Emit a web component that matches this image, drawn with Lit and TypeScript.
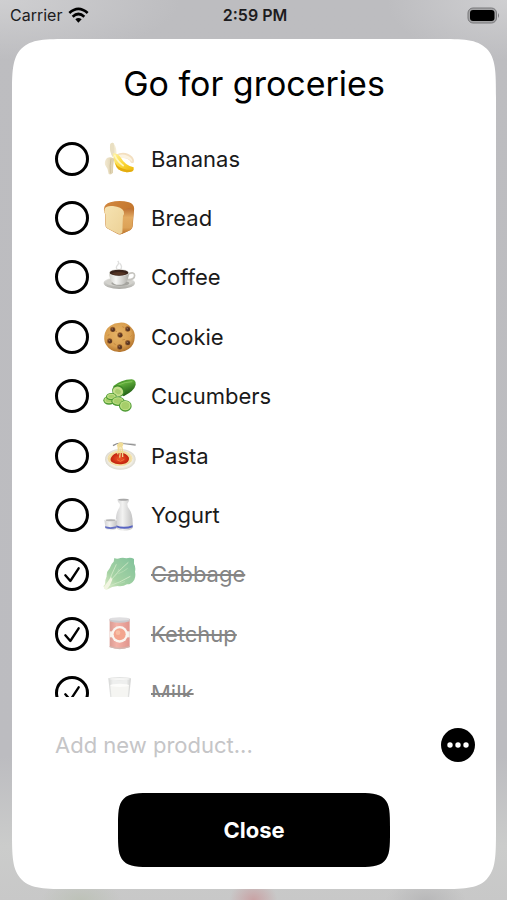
import { LitElement, html, css, svg, nothing } from "lit";
import type { TemplateResult } from "lit";
import { customElement, property, state } from "lit/decorators.js";
import { classMap } from "lit/directives/class-map.js";

interface Product {
  name: string;
  done: boolean;
}

/* Product pictures, drawn on a 102 x 102 canvas. */
const pictures: Record<string, TemplateResult> = {
  Bananas: svg`
    <defs>
      <linearGradient id="ba" x1="0" y1="0" x2="1" y2="1">
        <stop offset="0" stop-color="#fff3a0" /><stop offset=".5" stop-color="#fbd83a" /><stop offset="1" stop-color="#eab305" />
      </linearGradient>
      <linearGradient id="bp" x1="0" y1="0" x2="1" y2="0">
        <stop offset="0" stop-color="#f3ead3" /><stop offset="1" stop-color="#d9cba6" />
      </linearGradient>
    </defs>
    <path d="M22 6Q28 0 32 4Q42 18 40 40L28 44Q18 24 22 6Z" fill="#f4ecd4" />
    <path d="M22 6Q28 0 32 4Q36 20 34 40L28 44Q18 24 22 6Z" fill="#e9dfc2" />
    <path d="M38 38Q66 24 88 44Q96 54 91 63L84 62Q80 48 56 47Z" fill="#f3dfc0" />
    <path d="M44 40Q66 32 84 48Q90 55 88 61Q78 46 52 48Z" fill="#fbf2df" />
    <path d="M30 34Q46 34 54 48Q66 70 92 76Q94 84 88 88Q64 96 46 82Q32 70 30 34Z" fill="url(#ba)" />
    <path d="M36 62Q48 84 90 84L88 88Q64 96 46 82Q40 76 36 62Z" fill="#e3ac10" />
    <path d="M34 38Q44 60 62 72" stroke="#fff6bd" stroke-width="5" fill="none" />
    <path d="M12 48Q24 42 34 50Q30 66 30 92Q24 100 17 96Q16 80 6 68Q4 56 12 48Z" fill="url(#bp)" />
    <path d="M24 50Q20 70 22 94" stroke="#c4b38a" stroke-width="2" fill="none" />`,
  Bread: svg`
    <defs>
      <linearGradient id="br" x1="0" y1="0" x2="1" y2="1">
        <stop offset="0" stop-color="#d2883f" /><stop offset="1" stop-color="#b96a22" />
      </linearGradient>
      <linearGradient id="bs" x1="0" y1="0" x2="0" y2="1">
        <stop offset="0" stop-color="#bd7033" /><stop offset=".35" stop-color="#e3ab62" /><stop offset=".75" stop-color="#dca257" /><stop offset="1" stop-color="#bb7128" />
      </linearGradient>
      <linearGradient id="bf" x1="0" y1="0" x2="1" y2="1">
        <stop offset="0" stop-color="#f6e3b2" /><stop offset="1" stop-color="#ecd196" />
      </linearGradient>
    </defs>
    <path d="M3 23Q4 9 22 4Q50-4 78 4Q96 10 93 28L89 76Q88 86 76 90L54 100Q48 102 40 97L12 82Q7 79 7 70L6 38Q2 32 3 23Z" fill="url(#br)" />
    <path d="M60 32Q66 22 80 22Q94 24 91 38L88 76Q87 85 76 90L56 99Z" fill="url(#bs)" />
    <path d="M5 23Q10 13 30 15Q56 18 62 30Q65 38 60 45L58 95Q50 102 41 96L13 82Q8 79 8 70L7 39Q2 32 5 23Z" fill="url(#bf)" />`,
  Coffee: svg`
    <defs>
      <linearGradient id="cs" x1="0" y1="0" x2="0" y2="1">
        <stop offset="0" stop-color="#efefec" /><stop offset="1" stop-color="#aaa9a4" />
      </linearGradient>
      <linearGradient id="cc" x1="0" y1="0" x2="1" y2="0">
        <stop offset="0" stop-color="#cfcec9" /><stop offset=".35" stop-color="#f6f6f4" /><stop offset="1" stop-color="#aeada8" />
      </linearGradient>
    </defs>
    <path d="M44 30Q36 22 44 15Q50 8 44 3M52 30Q60 20 50 10" stroke="#dededd" stroke-width="4" fill="none" />
    <ellipse cx="49" cy="69" rx="47" ry="18" fill="url(#cs)" />
    <ellipse cx="49" cy="66" rx="40" ry="13" fill="#d3d2cd" />
    <ellipse cx="52" cy="70" rx="27" ry="8" fill="#a5a49f" />
    <path d="M76 42Q94 34 95 46Q95 60 72 60" stroke="#c6c5c0" stroke-width="5" fill="none" />
    <path d="M18 38H78Q78 60 64 71Q48 78 33 71Q18 60 18 38Z" fill="url(#cc)" />
    <ellipse cx="48" cy="38" rx="30" ry="11" fill="#e4e4e0" />
    <ellipse cx="48" cy="38" rx="28" ry="9" fill="#38221a" />
    <ellipse cx="48" cy="41" rx="20" ry="5" fill="#543424" />`,
  Cookie: svg`
    <defs>
      <radialGradient id="ck" cx=".45" cy=".4" r=".6">
        <stop offset="0" stop-color="#e6b467" /><stop offset=".7" stop-color="#d99f50" /><stop offset="1" stop-color="#b4752e" />
      </radialGradient>
    </defs>
    <path d="M50 8Q72 6 84 22Q98 36 95 54Q94 76 77 87Q62 98 44 95Q22 94 12 78Q2 66 4 48Q6 28 22 17Q34 8 50 8Z" fill="url(#ck)" />
    ${[[29, 28], [74, 27], [51, 45], [20, 63], [74, 68], [50, 81]].map(
      ([x, y]) => svg`
        <circle cx=${x} cy=${y} r="8" fill="#98602f" />
        <circle cx=${x + 1} cy=${y + 1} r="6" fill="#5a3622" />
        <circle cx=${x - 1} cy=${y - 1} r="2" fill="#96705a" />`,
    )}
    <path d="M36 32l6 3M58 60l8-2M32 70l6 4M58 20l6 3M86 46l-4 4M14 46l5-2" stroke="#b97c36" stroke-width="2" />`,
  Cucumbers: svg`
    <defs>
      <linearGradient id="cu" x1="0" y1="0" x2=".5" y2="1">
        <stop offset="0" stop-color="#2e7a1d" /><stop offset=".4" stop-color="#5fad39" /><stop offset="1" stop-color="#1e5a14" />
      </linearGradient>
    </defs>
    <path d="M30 22Q54 2 86 1Q99 2 98 17Q95 34 62 52Z" fill="url(#cu)" />
    <path d="M46 18Q66 8 88 8" stroke="#85c45c" stroke-width="3" fill="none" />
    <ellipse cx="46" cy="36" rx="19" ry="17" transform="rotate(28 46 36)" fill="#3d8a26" />
    <ellipse cx="45" cy="37" rx="16" ry="14" transform="rotate(28 45 37)" fill="#c4de8b" />
    <ellipse cx="45" cy="38" rx="9" ry="7" transform="rotate(28 45 38)" fill="#a8cc6e" />
    ${[[18, 63, 17, 13], [25, 52, 16, 11], [45, 66, 20, 14], [67, 80, 19, 17]].map(
      ([x, y, rx, ry]) => svg`
        <ellipse cx=${x} cy=${y + 1} rx=${rx} ry=${ry} fill="#4d9a33" />
        <ellipse cx=${x} cy=${y} rx=${rx - 3} ry=${ry - 3} fill="#c0df86" />
        <ellipse cx=${x} cy=${y} rx=${rx - 7} ry=${ry - 6} fill="#a6ce6a" />`,
    )}`,
  Pasta: svg`
    <defs>
      <radialGradient id="pl">
        <stop offset="0" stop-color="#fff" /><stop offset=".8" stop-color="#f1eee3" /><stop offset="1" stop-color="#dad8cf" />
      </radialGradient>
      <radialGradient id="ps">
        <stop offset="0" stop-color="#ee5a28" /><stop offset="1" stop-color="#c3210e" />
      </radialGradient>
    </defs>
    <ellipse cx="52" cy="61" rx="46" ry="31" fill="url(#pl)" />
    <ellipse cx="51" cy="58" rx="37" ry="23" fill="#f0dba0" />
    <path d="M17 56Q28 36 50 38M20 66Q36 82 62 79M84 66Q91 48 70 42" stroke="#f8e6aa" stroke-width="3" fill="none" />
    <path d="M24 56Q32 40 50 42Q70 40 78 56Q80 71 60 75Q40 78 28 70Q20 64 24 56Z" fill="url(#ps)" />
    <path d="M42 62l10 5 12-6" stroke="#f2703a" stroke-width="3" fill="none" />
    <path d="M48 12Q54 32 50 56M54 12Q60 34 59 54M44 18Q48 28 44 46" stroke="#efd98f" stroke-width="4" fill="none" />
    <path d="M30 20Q44 10 60 13L98 18" stroke="#8d8d8d" stroke-width="4" fill="none" />
    <path d="M60 12L98 15" stroke="#d5d5d5" stroke-width="2" />
    <path d="M42 18Q48 6 60 12Q64 20 54 24Q44 26 42 18Z" fill="#f0dc96" />`,
  Yogurt: svg`
    <defs>
      <linearGradient id="yo" x1="0" y1="0" x2="1" y2="0">
        <stop offset="0" stop-color="#d2d2d3" /><stop offset=".4" stop-color="#f2f2f1" /><stop offset="1" stop-color="#c2c2c2" />
      </linearGradient>
    </defs>
    <path d="M44 4Q60-1 78 4Q80 9 73 17Q72 25 79 34Q91 50 89 90Q82 98 64 98Q46 98 40 91Q35 54 46 34Q53 25 50 17Q42 10 44 4Z" fill="url(#yo)" />
    <ellipse cx="61" cy="5" rx="15" ry="3" fill="#a8a8a8" />
    <path d="M39 82Q62 91 89 82V88Q64 97 40 88Z" fill="#5864c2" />
    <path d="M4 66H42L39 93Q24 100 8 93Z" fill="url(#yo)" />
    <ellipse cx="23" cy="66" rx="19" ry="4" fill="#f6f6f6" />
    <ellipse cx="23" cy="67" rx="15" ry="3" fill="#b6b6b6" />
    <path d="M6 85Q22 90 41 85L40 90Q22 96 7 90Z" fill="#6570c4" />`,
  Cabbage: svg`
    <defs>
      <linearGradient id="ca" x1="1" y1="0" x2="0" y2="1">
        <stop offset="0" stop-color="#2f9a5a" /><stop offset=".65" stop-color="#6cb668" /><stop offset="1" stop-color="#dce9b2" />
      </linearGradient>
    </defs>
    <path d="M34 3Q42 7 52 3Q62 1 70 4Q84 0 93 6L93 20Q99 30 96 44Q99 58 94 68Q86 82 72 82Q58 90 44 87Q26 88 14 97Q4 100 3 91Q-1 88 6 82Q6 68 11 58Q10 44 20 34Q24 20 32 14Z" fill="url(#ca)" />
    <path d="M10 90Q30 56 76 16M14 86Q24 54 40 22M16 88Q52 76 82 58" stroke="#a9d79b" stroke-width="3" fill="none" />
    <path d="M34 60Q44 50 48 36M46 50Q62 44 74 34M44 78Q54 80 66 74" stroke="#93cb8c" stroke-width="2" fill="none" />
    <path d="M3 90Q15 73 24 60L28 68Q22 86 12 97Q4 99 3 90Z" fill="#eaf0cf" />`,
  Ketchup: svg`
    <defs>
      <linearGradient id="ke" x1="0" y1="0" x2="1" y2="0">
        <stop offset="0" stop-color="#c25a4c" /><stop offset=".35" stop-color="#ec7f6e" /><stop offset="1" stop-color="#cc4f42" />
      </linearGradient>
    </defs>
    <path d="M20 6H80V90Q50 102 20 90Z" fill="url(#ke)" />
    <path d="M20 87Q50 97 80 87V91Q50 102 20 91Z" fill="#b4897f" />
    <path d="M20 5V13Q50 22 80 13V5Z" fill="#aaa9ae" />
    <ellipse cx="50" cy="6" rx="30" ry="5" fill="#cbc9cd" />
    <path d="M20 43H80V61H20Z" fill="#efe9df" />
    <circle cx="50" cy="52" r="25" fill="#f7f0e7" />
    <circle cx="50" cy="52" r="18" fill="#ec6a44" />
    <circle cx="45" cy="47" r="7" fill="#f39468" />`,
  Milk: svg`
    <defs>
      <linearGradient id="mi" x1="0" y1="0" x2="1" y2="0">
        <stop offset="0" stop-color="#b9bab9" /><stop offset=".2" stop-color="#e4e5e3" /><stop offset=".8" stop-color="#e4e5e3" /><stop offset="1" stop-color="#adafad" />
      </linearGradient>
    </defs>
    <path d="M16 7H84L75 94Q50 102 25 94Z" fill="url(#mi)" />
    <path d="M22 28H78L71 90Q50 96 29 90Z" fill="#efefea" />
    <ellipse cx="50" cy="28" rx="28" ry="5" fill="#fbfbf8" />
    <ellipse cx="50" cy="8" rx="34" ry="5" fill="#cfd0ce" />
    <ellipse cx="50" cy="9" rx="29" ry="3" fill="#f1f1ef" />`,
};

@customElement("status-bar")
class StatusBar extends LitElement {
  static styles = css`
    :host {
      display: grid;
      grid-template-columns: 1fr auto 1fr;
      align-items: center;
      height: 30px;
      padding: 0 7px 0 10px;
      font-size: 16px;
      line-height: 20px;
      color: #1c1c1e;
    }
    .carrier {
      display: flex;
      align-items: center;
      gap: 6px;
    }
    .time {
      font-weight: 600;
    }
    .battery {
      justify-self: end;
    }
    svg {
      display: block;
    }
  `;

  render() {
    return html`
      <div class="carrier">
        <span>Carrier</span>
        <svg width="21" height="16" viewBox="0 0 63 48" aria-hidden="true">
          <g fill="none" stroke="#000" stroke-width="8">
            <path d="M4 18Q31-7 59 18" />
            <path d="M14 29Q31 13 49 29" />
          </g>
          <path d="M22 37Q31 29 41 37L31 47Z" fill="#000" />
        </svg>
      </div>
      <div class="time">2:59 PM</div>
      <svg class="battery" width="33" height="17" viewBox="0 0 33 17" aria-hidden="true">
        <rect x="1" y="1" width="28.5" height="15" rx="5" fill="#a4a4a6" stroke="#78787b" />
        <rect x="3" y="3" width="24.5" height="11" rx="3" fill="#000" />
        <path d="M31 6Q33 8.500 31 11Z" fill="#78787b" />
      </svg>
    `;
  }
}

@customElement("product-row")
class ProductRow extends LitElement {
  @property({ attribute: false }) product!: Product;

  static styles = css`
    :host {
      display: flex;
      align-items: center;
    }
    .row {
      display: grid;
      grid-template-columns: 34px 34px 1fr;
      column-gap: 14px;
      align-items: center;
      flex: 1;
    }
    .tick {
      display: grid;
    }
    .tick > * {
      grid-area: 1 / 1;
    }
    .box {
      appearance: none;
      width: 34px;
      height: 34px;
      margin: 0;
      border: 3px solid #000;
      border-radius: 50%;
      background: #fff;
      cursor: pointer;
    }
    .check {
      pointer-events: none;
    }
    svg {
      display: block;
    }
    .name {
      color: #1a1a1a;
      font-size: 22px;
      line-height: 28px;
    }
    .done .name {
      color: #858585;
      text-decoration: line-through;
      text-decoration-thickness: 2px;
    }
    .done .picture {
      opacity: 0.6;
    }
  `;

  private toggle() {
    this.dispatchEvent(new CustomEvent("toggle-product", { detail: this.product, bubbles: true, composed: true }));
  }

  render() {
    const { name, done } = this.product;
    return html`
      <label class=${classMap({ row: true, done })}>
        <span class="tick">
          <input class="box" type="checkbox" .checked=${done} @change=${this.toggle} />
          ${done
            ? html`<svg class="check" width="34" height="34" viewBox="0 0 102 102" aria-hidden="true">
                <path d="M31 55L46 72L71 34" fill="none" stroke="#000" stroke-width="7" stroke-linecap="round" stroke-linejoin="round" />
              </svg>`
            : nothing}
        </span>
        <svg class="picture" width="34" height="34" viewBox="0 0 102 102" aria-hidden="true">${pictures[name]}</svg>
        <span class="name">${name}</span>
      </label>
    `;
  }
}

@customElement("app-root")
class AppRoot extends LitElement {
  @state() private products: Product[] = [
    ...["Bananas", "Bread", "Coffee", "Cookie", "Cucumbers", "Pasta", "Yogurt"].map((name) => ({ name, done: false })),
    ...["Cabbage", "Ketchup", "Milk"].map((name) => ({ name, done: true })),
  ];

  static styles = css`
    :host {
      display: flex;
      flex-direction: column;
      height: 100vh;
      min-height: 480px;
      box-sizing: border-box;
      padding-bottom: 11px;
      font-family: Inter, "Liberation Sans", sans-serif;
      background:
        radial-gradient(24px 20px at 50% 100%, #c9a2a4, transparent),
        radial-gradient(40px 20px at 16% 100%, #bdc2b8, transparent),
        radial-gradient(40px 20px at 84% 100%, #b8b8b9, transparent),
        radial-gradient(180px 60px at 0 0, #cfcfd1, transparent),
        radial-gradient(120px 60px at 100% 0, #cfcfd1, transparent),
        linear-gradient(#bdbdc0, #bcbcc0 84%, #cbcccb 94%, #c8c8c8);
    }
    status-bar {
      margin-bottom: 9px;
    }
    .card {
      display: flex;
      flex-direction: column;
      flex: 1;
      min-height: 0;
      box-sizing: border-box;
      margin: 0 11px 0 12px;
      padding-bottom: 22px;
      border-radius: 44px;
      background: #fff;
    }
    .title {
      margin: 0;
      font-size: 34px;
      font-weight: 400;
      line-height: 90px;
      text-align: center;
      color: #000;
    }
    .viewport {
      flex: 1;
      min-height: 0;
      overflow-y: auto;
      scrollbar-width: none;
    }
    .list {
      display: grid;
      grid-auto-rows: 1fr;
      min-height: 594px;
      margin: 0;
      padding: 0 43px;
      list-style: none;
    }
    .item {
      display: grid;
    }
    .add {
      display: flex;
      align-items: center;
      height: 96px;
      padding: 0 21px 0 43px;
    }
    .field {
      flex: 1;
      min-width: 0;
      padding: 0;
      border: 0;
      outline: 0;
      background: none;
      font: inherit;
      font-size: 22px;
      color: #1a1a1a;
    }
    .field::placeholder {
      color: #c5c5c7;
      opacity: 1;
    }
    .more {
      width: 34px;
      height: 34px;
      padding: 0;
      border: 0;
      border-radius: 50%;
      background: #000;
      cursor: pointer;
    }
    .more svg {
      display: block;
    }
    .close {
      align-self: center;
      width: 56%;
      height: 74px;
      padding: 0;
      border: 0;
      border-radius: 24px;
      background: #000;
      color: #fff;
      font: inherit;
      font-size: 22px;
      font-weight: 700;
      cursor: pointer;
    }
    @supports (corner-shape: squircle) {
      .card {
        border-radius: 60px;
        corner-shape: squircle;
      }
      .close {
        border-radius: 36px;
        corner-shape: squircle;
      }
    }
  `;

  private toggle(event: CustomEvent<Product>) {
    this.products = this.products.map((p) => (p === event.detail ? { ...p, done: !p.done } : p));
  }

  render() {
    return html`
      <status-bar></status-bar>
      <main class="card">
        <h1 class="title">Go for groceries</h1>
        <div class="viewport">
          <ul class="list" @toggle-product=${this.toggle}>
            ${this.products.map((p) => html`<li class="item"><product-row .product=${p}></product-row></li>`)}
          </ul>
        </div>
        <div class="add">
          <input class="field" type="text" placeholder="Add new product..." aria-label="Add new product" />
          <button class="more" type="button" aria-label="More options">
            <svg width="34" height="34" viewBox="0 0 34 34" fill="#fff" aria-hidden="true">
              <circle cx="9" cy="17" r="2.700" />
              <circle cx="17" cy="17" r="2.700" />
              <circle cx="25" cy="17" r="2.700" />
            </svg>
          </button>
        </div>
        <button class="close" type="button">Close</button>
      </main>
    `;
  }
}
